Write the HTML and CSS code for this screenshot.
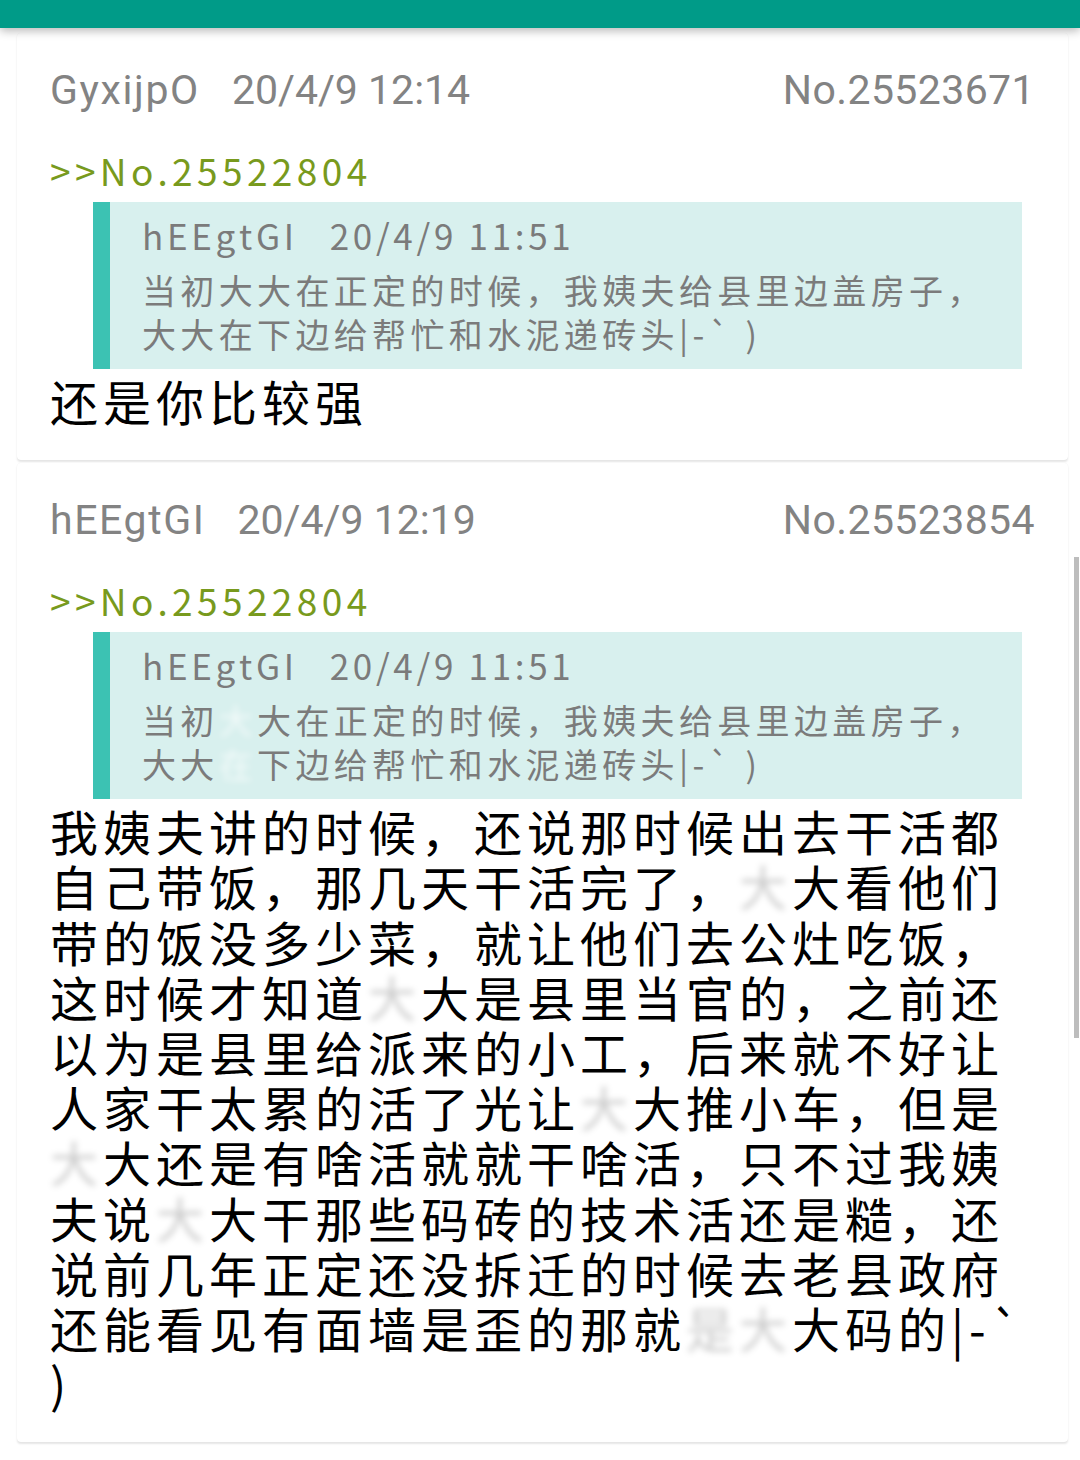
FILE: index.html
```html
<!DOCTYPE html>
<html lang="zh-CN">
<head>
<meta charset="utf-8">
<title>Thread</title>
<link rel="stylesheet" href="styles.css">
</head>
<body>
<div class="appbar"></div>
<div class="list">
  <div class="card">
    <div class="meta">
      <div class="who"><span class="uid">GyxijpO</span><span class="time">20/4/9 12:14</span></div>
      <div class="no">No.25523671</div>
    </div>
    <div class="ref">&gt;&gt;No.25522804</div>
    <div class="quote">
      <div class="qbar"></div>
      <div class="qbody">
        <div class="qmeta"><span class="uid">hEEgtGI</span><span class="time">20/4/9 11:51</span></div>
        <div class="qtext">当初大大在正定的时候，我姨夫给县里边盖房子，大大在下边给帮忙和水泥递砖头|-` )</div>
      </div>
    </div>
    <div class="content">还是你比较强</div>
  </div>
  <div class="card">
    <div class="meta">
      <div class="who"><span class="uid">hEEgtGI</span><span class="time">20/4/9 12:19</span></div>
      <div class="no">No.25523854</div>
    </div>
    <div class="ref">&gt;&gt;No.25522804</div>
    <div class="quote">
      <div class="qbar"></div>
      <div class="qbody">
        <div class="qmeta"><span class="uid">hEEgtGI</span><span class="time">20/4/9 11:51</span></div>
        <div class="qtext">当初<span class="blur">大</span>大在正定的时候，我姨夫给县里边盖房子，大大<span class="blur">在</span>下边给帮忙和水泥递砖头|-` )</div>
      </div>
    </div>
    <div class="content">我姨夫讲的时候，还说那时候出去干活都自己带饭，那几天干活完了，<span class="blur">大</span>大看他们带的饭没多少菜，就让他们去公灶吃饭，这时候才知道<span class="blur">大</span>大是县里当官的，之前还以为是县里给派来的小工，后来就不好让人家干太累的活了光让<span class="blur">大</span>大推小车，但是<span class="blur">大</span>大还是有啥活就就干啥活，只不过我姨夫说<span class="blur">大</span>大干那些码砖的技术活还是糙，还说前几年正定还没拆迁的时候去老县政府还能看见有面墙是歪的那就<span class="blur">是</span><span class="blur">大</span>大码的|-` )</div>
  </div>
</div>
<div class="scrollbar"></div>
</body>
</html>
```

FILE: styles.css
```css
html, body {
  margin: 0;
  padding: 0;
  background: #ffffff;
}

body {
  width: 1080px;
  height: 1460px;
  overflow: hidden;
  font-family: "Noto Sans CJK SC", "Noto Sans", sans-serif;
}

.appbar {
  position: relative;
  z-index: 2;
  height: 28px;
  background: #009b88;
  box-shadow: 0 3px 10px rgba(0, 0, 0, 0.28);
}

.list {
  padding: 5px 12px 0 17px;
}

.card {
  background: #ffffff;
  border-radius: 4px;
  box-shadow: 0 2px 2px rgba(0, 0, 0, 0.10), 0 0 1px rgba(0, 0, 0, 0.06);
  padding: 27px 33px 32px 33px;
  margin-bottom: 3px;
}

.meta {
  display: flex;
  justify-content: space-between;
  align-items: baseline;
  font-family: Roboto, "Noto Sans", sans-serif;
  font-size: 41px;
  line-height: 60px;
  color: #838383;
}

.who .uid {
  letter-spacing: 1.6px;
}

.who .time {
  margin-left: 32px;
}

.no {
  letter-spacing: 0.4px;
}

.ref {
  margin-top: 25px;
  font-size: 37px;
  line-height: 50px;
  letter-spacing: 4.4px;
  color: #789a1d;
}

.quote {
  display: flex;
  margin: 7px 13px 0 43px;
}

.qbar {
  width: 17px;
  flex: none;
  background: #3cc2b3;
}

.qbody {
  flex: 1;
  background: #d8f0ee;
  padding: 10px 20px 13px 32px;
  color: #7b7b7b;
}

.qmeta {
  font-size: 35px;
  line-height: 46px;
  letter-spacing: 3.7px;
}

.qmeta .time {
  margin-left: 32px;
}

.qtext {
  margin-top: 10px;
  font-size: 34px;
  line-height: 44px;
  letter-spacing: 4.35px;
}

.content {
  margin-top: 4px;
  font-size: 48px;
  line-height: 55.2px;
  letter-spacing: 5px;
  color: #000000;
}

.blur {
  color: rgba(0, 0, 0, 0.2);
  filter: blur(3px);
}

.qtext .blur {
  color: rgba(255, 255, 255, 0.7);
}

.scrollbar {
  position: absolute;
  top: 557px;
  right: 1px;
  width: 5px;
  height: 481px;
  background: #bdbdbd;
}
```
